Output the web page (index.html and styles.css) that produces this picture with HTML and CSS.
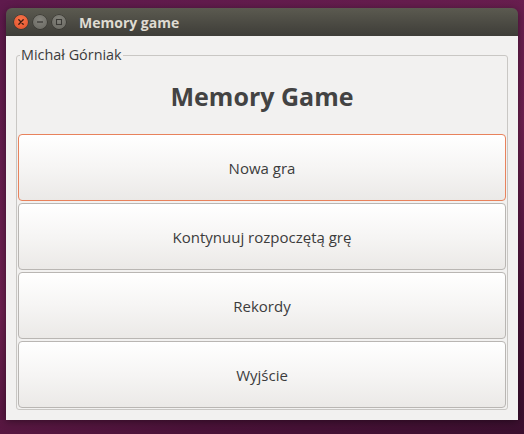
FILE: index.html
```html
<!DOCTYPE html>
<html lang="pl">
<head>
<meta charset="utf-8">
<title>Memory game</title>
<link rel="stylesheet" href="styles.css">
</head>
<body>
<div class="window">
  <div class="titlebar">
    <div class="controls">
      <span class="ctl close"><svg width="14" height="14" viewBox="0 0 14 14"><path d="M4.8 4.8 L9.2 9.2 M9.2 4.8 L4.8 9.2" stroke="#3a1a10" stroke-width="1.3" stroke-linecap="round"/></svg></span>
      <span class="ctl"><svg width="14" height="14" viewBox="0 0 14 14"><path d="M4 7 H10" stroke="#3b3a36" stroke-width="1.3"/></svg></span>
      <span class="ctl"><svg width="14" height="14" viewBox="0 0 14 14"><rect x="4.5" y="4.5" width="5" height="5" fill="none" stroke="#3b3a36" stroke-width="1.1"/></svg></span>
    </div>
    <div class="title">Memory game</div>
  </div>
  <div class="content">
    <fieldset class="group">
      <legend>Michał Górniak</legend>
      <h1 class="heading">Memory Game</h1>
      <div class="buttons">
        <button class="btn focused">Nowa gra</button>
        <button class="btn">Kontynuuj rozpoczętą grę</button>
        <button class="btn">Rekordy</button>
        <button class="btn">Wyjście</button>
      </div>
    </fieldset>
  </div>
</div>
</body>
</html>
```
FILE: styles.css
```css
html, body {
  margin: 0;
  padding: 0;
  height: 100%;
}
body {
  background: linear-gradient(160deg, #5e1a4c 0%, #6e2050 50%, #4a1238 80%, #3a0f2e 100%);
  font-family: "Open Sans", "DejaVu Sans", sans-serif;
  padding: 8px 6px 0 6px;
  box-sizing: border-box;
}
.window {
  width: 512px;
  height: 411px;
  display: flex;
  flex-direction: column;
  box-shadow: 0 2px 8px rgba(0,0,0,0.45);
  border-radius: 6px 6px 0 0;
}
.titlebar {
  height: 28px;
  flex: none;
  border-radius: 6px 6px 0 0;
  background: linear-gradient(#5b5a50, #3e3d38);
  display: flex;
  align-items: center;
  padding-left: 8px;
}
.controls {
  display: flex;
  gap: 5px;
  margin-right: 13px;
}
.ctl {
  width: 14px;
  height: 14px;
  border-radius: 50%;
  background: radial-gradient(circle at 50% 35%, #86857e, #67665f);
  box-shadow: 0 0 0 0.5px #2e2d29;
  display: block;
}
.ctl svg { display: block; }
.close {
  background: radial-gradient(circle at 50% 35%, #f7744a, #e0502a);
}
.title {
  color: #dfdbd2;
  font-weight: bold;
  font-size: 14px;
}
.content {
  flex: 1;
  background: #f2f1f0;
  padding: 10px 10px 10px 10px;
  display: flex;
  flex-direction: column;
}
.group {
  margin: 0;
  padding: 0 1px 1px 1px;
  border: 1px solid #c9c7c4;
  border-radius: 3px;
  flex: 1;
  display: flex;
  flex-direction: column;
  min-width: 0;
}
.group legend {
  padding: 0 1px;
  margin-left: 2px;
  font-size: 14.4px;
  color: #3c3c3c;
  line-height: 18px;
}
.heading {
  margin: 15px 0 0 0;
  height: 55px;
  text-align: center;
  font-size: 25px;
  font-weight: bold;
  color: #434343;
  line-height: 34px;
}
.buttons {
  display: flex;
  flex-direction: column;
  gap: 2px;
}
.btn {
  height: 67px;
  border: 1px solid #b9b6b3;
  border-radius: 4px;
  background: linear-gradient(#ffffff, #f6f5f4 50%, #ebe9e7);
  font-family: "Open Sans", "DejaVu Sans", sans-serif;
  font-size: 15px;
  color: #3c3c3c;
  padding: 0;
}
.btn.focused {
  border-color: #e8825c;
}
```
